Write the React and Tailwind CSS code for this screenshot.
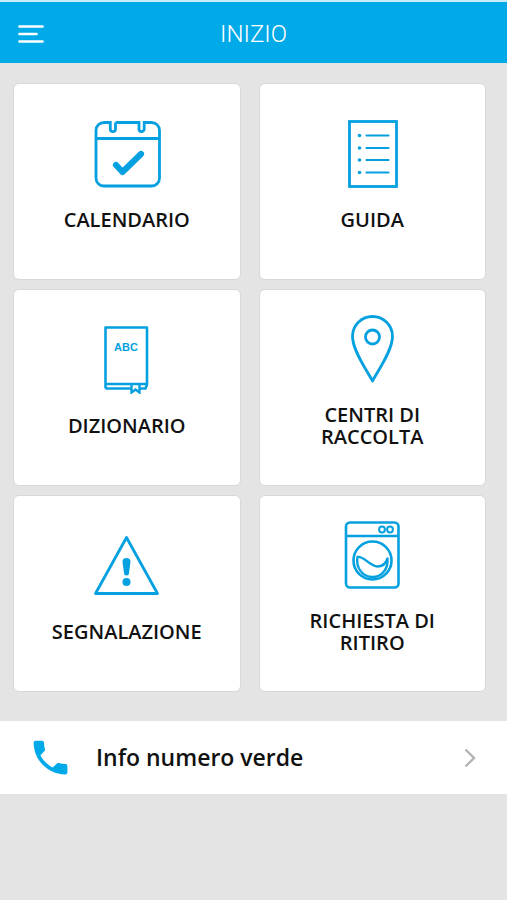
// App.jsx
import React from 'react';
import { MdPhone } from 'react-icons/md';

const iconProps = {
  viewBox: '0 0 68 68',
  className: 'h-[68px] w-[68px] shrink-0',
  fill: 'none',
  stroke: 'currentColor',
  strokeWidth: 2.8,
  'aria-hidden': true,
};

const CalendarIcon = () => (
  <svg {...iconProps}>
    <path d="M22.5 2.5H46V9a2.6 2.6 0 0 0 5.2 0V2.5H58.5a8 8 0 0 1 8 8V58a8 8 0 0 1-8 8H11a8 8 0 0 1-8-8V10.5a8 8 0 0 1 8-8H17.3V9a2.6 2.6 0 0 0 5.2 0V2.5" />
    <path d="M3 18.5H66.5" />
    <path d="M23 45L29.5 52L48 34" strokeWidth="6.2" strokeLinecap="round" strokeLinejoin="round" />
  </svg>
);

const GuideIcon = () => (
  <svg {...iconProps}>
    <rect x="11.5" y="1.5" width="47" height="65" />
    <path d="M28.5 15.5H50.5M28.5 28H50.5M28.5 40H50.5M28.5 52.5H50.5" strokeWidth="2.2" strokeLinecap="round" />
    <g fill="currentColor" stroke="none">
      <circle cx="21.5" cy="15.5" r="1.8" />
      <circle cx="21.5" cy="28" r="1.8" />
      <circle cx="21.5" cy="40" r="1.8" />
      <circle cx="21.5" cy="52.5" r="1.8" />
    </g>
  </svg>
);

const DictionaryIcon = () => (
  <svg {...iconProps}>
    <path d="M12.5 62.5V1.5H54V58.5L52.5 62.5H47M12.5 58H54M12.5 62.5H38" strokeWidth="2.6" strokeLinejoin="round" />
    <path d="M38.5 58.5V66.5L42.5 63.5L46.5 66.5V58.5" strokeWidth="2.4" />
    <text
      x="33"
      y="25"
      textAnchor="middle"
      fill="currentColor"
      stroke="none"
      className="font-['Liberation_Sans',sans-serif] text-[11px] font-bold"
    >
      ABC
    </text>
  </svg>
);

const PinIcon = () => (
  <svg {...iconProps}>
    <path d="M34.5 66C30 57 14.5 36 14.5 21.5a20 20 0 0 1 40 0C54.5 36 39 57 34.5 66Z" strokeLinejoin="round" />
    <circle cx="34.5" cy="22" r="7" />
  </svg>
);

const WarningIcon = () => (
  <svg {...iconProps}>
    <path d="M33.5 5.5L64.5 61.5H2.5Z" strokeLinejoin="round" />
    <g fill="currentColor" stroke="none">
      <path d="M29.5 30a4 4 0 0 1 8 0L36 41a2.5 2.5 0 0 1-5 0Z" />
      <circle cx="33.5" cy="50" r="4" />
    </g>
  </svg>
);

const WasherIcon = () => (
  <svg {...iconProps}>
    <rect x="8" y="1.5" width="52.5" height="65" rx="4" strokeWidth="2.6" />
    <path d="M8 15H60.5" strokeWidth="2.4" />
    <circle cx="44" cy="8.5" r="2.9" strokeWidth="2" />
    <circle cx="52" cy="8.5" r="2.9" strokeWidth="2" />
    <circle cx="34.5" cy="39.5" r="19" strokeWidth="2.6" />
    <path d="M19.5 36C25 34 32 45.5 39.5 45.5C45 45.5 48 42 49.5 37.5C50.5 48 43.5 56 34.5 56C25 56 17.5 47 19.5 36Z" strokeWidth="2.4" strokeLinejoin="round" />
  </svg>
);

const tiles = [
  { id: 'calendario', label: 'CALENDARIO', Icon: CalendarIcon },
  { id: 'guida', label: 'GUIDA', Icon: GuideIcon },
  { id: 'dizionario', label: 'DIZIONARIO', Icon: DictionaryIcon },
  { id: 'centri', label: 'CENTRI DI RACCOLTA', Icon: PinIcon },
  { id: 'segnalazione', label: 'SEGNALAZIONE', Icon: WarningIcon },
  { id: 'ritiro', label: 'RICHIESTA DI RITIRO', Icon: WasherIcon },
];

const Tile = ({ label, Icon }) => (
  <button
    type="button"
    className="flex min-h-[197px] flex-col items-center justify-center gap-[21px] rounded-md border border-[#d8d8d8] bg-white px-9 pb-3 text-[#05a0e0]"
  >
    <Icon />
    <span className="text-xl leading-[22px] font-semibold text-[#111]">{label}</span>
  </button>
);

const App = () => {
  return (
    <div className="min-h-screen bg-[#e4e4e4] font-['Open_Sans',sans-serif]">
      {/* Header */}
      <header className="grid h-[63px] grid-cols-[1fr_auto_1fr] items-center border-t-2 border-[#c5ecfb] bg-[#00a9e8] px-[18px] pt-0.5 text-white">
        <button type="button" aria-label="Menu" className="justify-self-start">
          <svg viewBox="0 0 26 20" className="h-5 w-[26px]" stroke="currentColor" strokeWidth="2.6" strokeLinecap="round" aria-hidden="true">
            <path d="M1.5 2.5H24.5M1.5 10H18.5M1.5 17.5H24.5" />
          </svg>
        </button>
        <h1 className="font-[Roboto,sans-serif] text-2xl font-light">INIZIO</h1>
      </header>

      {/* Tiles */}
      <main className="grid grid-cols-2 gap-x-[18px] gap-y-[9px] pt-5 pr-[21px] pb-[29px] pl-[13px]">
        {tiles.map((tile) => (
          <Tile key={tile.id} label={tile.label} Icon={tile.Icon} />
        ))}
      </main>

      {/* Phone row */}
      <button type="button" className="flex h-[73px] w-full items-center bg-white pr-[31px] pl-7 text-left">
        <MdPhone className="h-[45px] w-[45px] text-[#00a9e8]" aria-hidden="true" />
        <span className="ml-[23px] flex-1 text-[23px] font-semibold text-[#111]">Info numero verde</span>
        <svg viewBox="0 0 12 20" className="h-5 w-3" fill="none" stroke="#b4b4b4" strokeWidth="2.4" aria-hidden="true">
          <path d="M1.5 1.5L10 10L1.5 18.5" />
        </svg>
      </button>
    </div>
  );
};

export default App;
